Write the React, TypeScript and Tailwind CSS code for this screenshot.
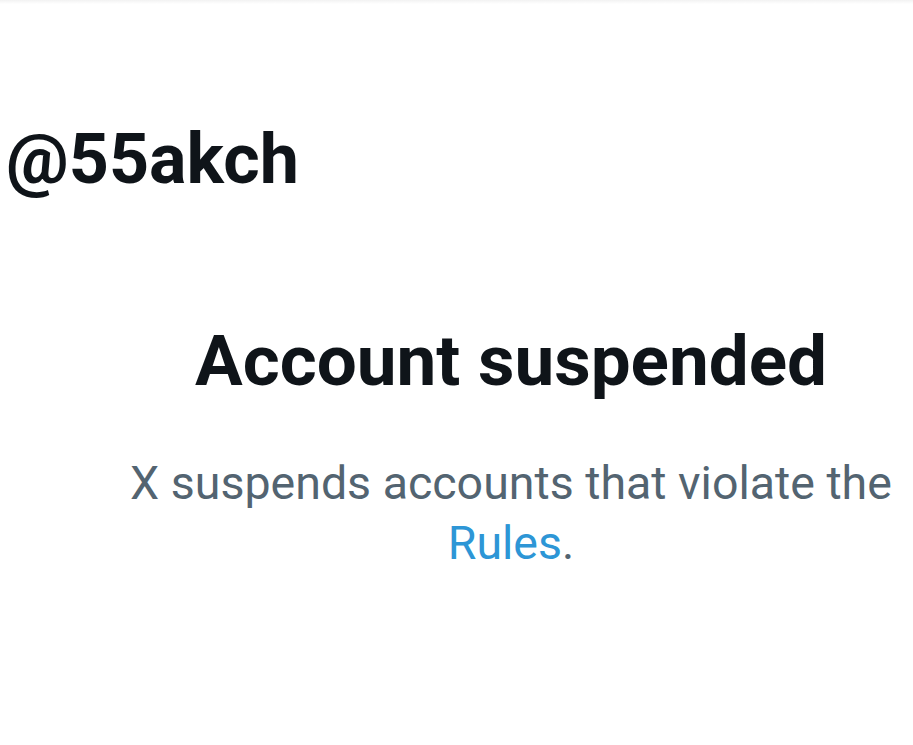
export default function App() {
  return (
    <div className="w-[913px] h-[745px] overflow-hidden bg-white" style={{ fontFamily: "Roboto, 'Liberation Sans', sans-serif" }}>
      {/* faint top edge */}
      <div className="h-[4px] bg-gradient-to-b from-[#f2f2f2] to-white" />

      {/* handle */}
      <div className="pt-[115px] pl-[6px]">
        <h1 className="text-[70px] leading-[80px] font-bold text-[#0f1419]">@55akch</h1>
      </div>

      {/* suspended notice */}
      <div className="ml-[110px] w-[802px] mt-[122px] flex flex-col items-center text-center">
        <h2 className="text-[71px] leading-[80px] font-bold text-[#0f1419]">Account suspended</h2>
        <p className="mt-[52px] text-[46.5px] leading-[60px] text-[#536471]">
          X suspends accounts that violate the <a className="text-[#2d96d6]">Rules</a>.
        </p>
      </div>
    </div>
  );
}
